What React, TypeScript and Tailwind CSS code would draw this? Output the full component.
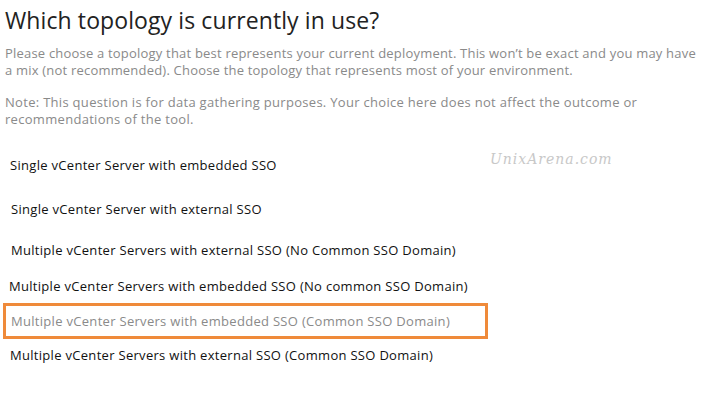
const options = [
  { label: "Single vCenter Server with embedded SSO", cls: "mt-[28px] pl-[10px]" },
  { label: "Single vCenter Server with external SSO", cls: "mt-[26px] pl-[11px]" },
  { label: "Multiple vCenter Servers with external SSO (No Common SSO Domain)", cls: "mt-[23px] pl-[11px]" },
  { label: "Multiple vCenter Servers with embedded SSO (No common SSO Domain)", cls: "mt-[18px] pl-[9px]" },
];

export default function App() {
  return (
    <div
      className="relative w-[703px] h-[393px] bg-white overflow-hidden text-[#1c1c1c]"
      style={{ fontFamily: '"Open Sans", sans-serif' }}
    >
      <div className="pl-[5px] pt-[5px]">
        <h1 className="text-[23px] leading-[30px] tracking-[0.1px] text-[#222]">Which topology is currently in use?</h1>
        <p className="mt-[10px] text-[13px] leading-[17px] tracking-[0.2px] text-[#8a8a8a]">
          Please choose a topology that best represents your current deployment. This won’t be exact and you may have
          <br />
          a mix (not recommended). Choose the topology that represents most of your environment.
        </p>
        <p className="mt-[15px] text-[13px] leading-[17px] tracking-[0.3px] text-[#8a8a8a]">
          Note: This question is for data gathering purposes. Your choice here does not affect the outcome or
          <br />
          recommendations of the tool.
        </p>
      </div>

      <div className="flex flex-col text-[13px] leading-[18px] tracking-[0.3px] text-[#111]">
        {options.map((o) => (
          <div key={o.label} className={o.cls}>
            {o.label}
          </div>
        ))}
        <div className="mt-[8px] ml-[3px] w-[485px] h-[36px] border-[3px] border-[#ef8a3a] flex items-center pl-[5px] text-[#8a8a8a]">
          Multiple vCenter Servers with embedded SSO (Common SSO Domain)
        </div>
        <div className="mt-[7px] pl-[10px]">Multiple vCenter Servers with external SSO (Common SSO Domain)</div>
      </div>

      <div
        className="absolute left-[490px] top-[149px] text-[14px] italic tracking-[1px] text-[#c8c8c8]"
        style={{ fontFamily: '"DejaVu Serif", serif' }}
      >
        UnixArena.com
      </div>
    </div>
  );
}
